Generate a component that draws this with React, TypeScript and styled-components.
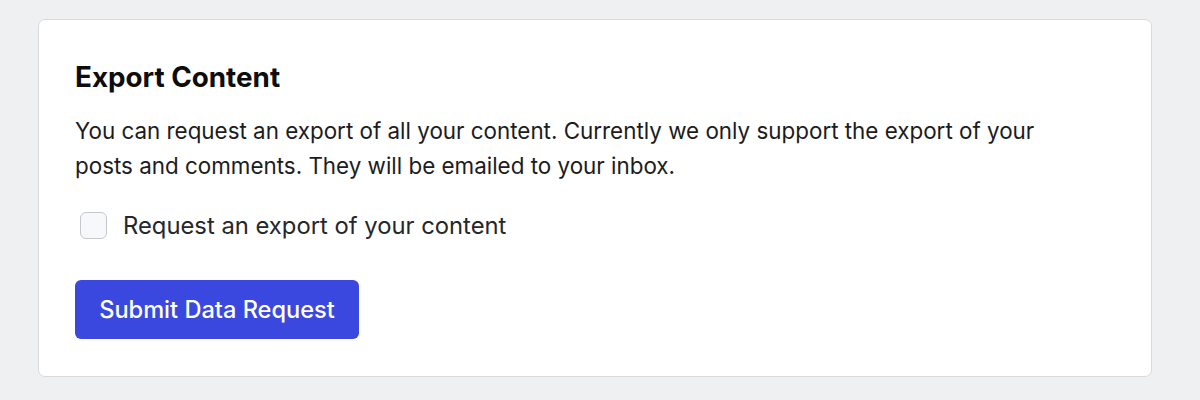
import React from "react";
import styled, { createGlobalStyle } from "styled-components";

const Global = createGlobalStyle`
  html, body { margin: 0; padding: 0; background: #eff0f2; }
  body { font-family: Inter, "Noto Sans", sans-serif; -webkit-font-smoothing: antialiased; }
  * { box-sizing: border-box; }
`;

const Page = styled.div`
  padding: 19px 48px 22px 38px;
`;

const Card = styled.section`
  background: #ffffff;
  border: 1px solid #d9dadc;
  border-radius: 7px;
  padding: 42px 36px 37px 36px;
  display: flex;
  flex-direction: column;
`;

const Title = styled.h2`
  margin: 0;
  font-size: 27.8px;
  line-height: 30px;
  font-weight: 700;
  color: #0d0d0d;
`;

const Text = styled.p`
  margin: 21px 0 0;
  max-width: 1010px;
  font-size: 22.4px;
  line-height: 35px;
  color: #1c1c1e;
`;

const CheckRow = styled.label`
  display: flex;
  align-items: center;
  gap: 16px;
  margin-top: 29px;
  padding-left: 5px;
  font-size: 23.8px;
  line-height: 27px;
  color: #26272b;
  cursor: pointer;
`;

const Box = styled.input`
  appearance: none;
  margin: 0;
  width: 27px;
  height: 27px;
  flex: none;
  border: 1.5px solid #c3c8cf;
  border-radius: 6px;
  background: #f7f8fa;
`;

const Button = styled.button`
  align-self: flex-start;
  margin-top: 41px;
  height: 59px;
  width: 284px;
  padding: 0;
  background: #3b48df;
  color: #ffffff;
  border: none;
  border-radius: 6px;
  font-family: inherit;
  font-size: 23.6px;
  font-weight: 500;
  cursor: pointer;
`;

export default function App() {
  return (
    <>
      <Global />
      <Page>
        <Card>
          <Title>Export Content</Title>
          <Text>
            You can request an export of all your content. Currently we only support the export of your
            posts and comments. They will be emailed to your inbox.
          </Text>
          <CheckRow>
            <Box type="checkbox" />
            Request an export of your content
          </CheckRow>
          <Button>Submit Data Request</Button>
        </Card>
      </Page>
    </>
  );
}
